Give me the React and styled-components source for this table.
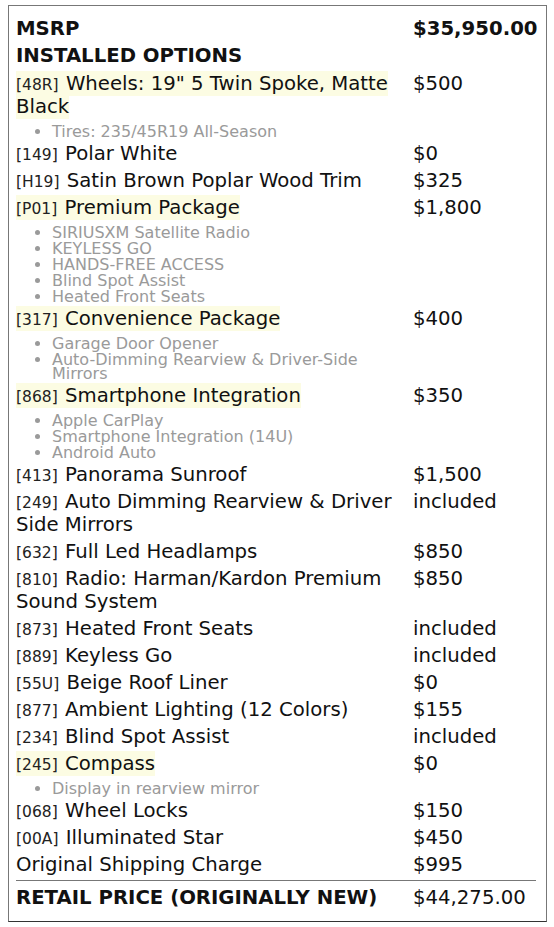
import React from "react";
import styled, { createGlobalStyle } from "styled-components";

const options = [
  { code: "48R", name: 'Wheels: 19" 5 Twin Spoke, Matte Black', price: "$500", mark: true, subs: ["Tires: 235/45R19 All-Season"] },
  { code: "149", name: "Polar White", price: "$0" },
  { code: "H19", name: "Satin Brown Poplar Wood Trim", price: "$325" },
  {
    code: "P01",
    name: "Premium Package",
    price: "$1,800",
    mark: true,
    subs: ["SIRIUSXM Satellite Radio", "KEYLESS GO", "HANDS-FREE ACCESS", "Blind Spot Assist", "Heated Front Seats"],
  },
  {
    code: "317",
    name: "Convenience Package",
    price: "$400",
    mark: true,
    subs: ["Garage Door Opener", "Auto-Dimming Rearview & Driver-Side Mirrors"],
  },
  {
    code: "868",
    name: "Smartphone Integration",
    price: "$350",
    mark: true,
    subs: ["Apple CarPlay", "Smartphone Integration (14U)", "Android Auto"],
  },
  { code: "413", name: "Panorama Sunroof", price: "$1,500" },
  { code: "249", name: "Auto Dimming Rearview & Driver Side Mirrors", price: "included" },
  { code: "632", name: "Full Led Headlamps", price: "$850" },
  { code: "810", name: "Radio: Harman/Kardon Premium Sound System", price: "$850" },
  { code: "873", name: "Heated Front Seats", price: "included" },
  { code: "889", name: "Keyless Go", price: "included" },
  { code: "55U", name: "Beige Roof Liner", price: "$0" },
  { code: "877", name: "Ambient Lighting (12 Colors)", price: "$155" },
  { code: "234", name: "Blind Spot Assist", price: "included" },
  { code: "245", name: "Compass", price: "$0", mark: true, subs: ["Display in rearview mirror"] },
  { code: "068", name: "Wheel Locks", price: "$150" },
  { code: "00A", name: "Illuminated Star", price: "$450" },
  { name: "Original Shipping Charge", price: "$995" },
];

function App() {
  return (
    <>
      <GlobalStyle />
      <Sheet>
        <Grid>
          <Cell bold>MSRP</Cell>
          <Cell bold>$35,950.00</Cell>
          <Heading>INSTALLED OPTIONS</Heading>
          {options.map((o) => (
            <React.Fragment key={o.name}>
              <Cell>
                <Label mark={o.mark}>
                  {o.code && <Code>[{o.code}]</Code>}
                  {o.code && " "}
                  {o.name}
                </Label>
              </Cell>
              <Cell>{o.price}</Cell>
              {o.subs && (
                <SubList>
                  {o.subs.map((s) => (
                    <li key={s}>{s}</li>
                  ))}
                </SubList>
              )}
            </React.Fragment>
          ))}
        </Grid>
        <Total>
          <Cell bold>RETAIL PRICE (ORIGINALLY NEW)</Cell>
          <Cell>$44,275.00</Cell>
        </Total>
      </Sheet>
    </>
  );
}

export default App;

const GlobalStyle = createGlobalStyle`
  body {
    margin: 5px 7px 0 8px;
    background: #fff;
    font-family: "DejaVu Sans", sans-serif;
    color: #111;
  }
`;

const Sheet = styled.div`
  border: 1px solid #777;
  border-bottom-color: #333;
  padding: 9px 8px 10px 7px;
`;

const Grid = styled.div`
  display: grid;
  grid-template-columns: 1fr 125px;
  column-gap: 8px;
`;

const Total = styled(Grid)`
  grid-template-columns: 1fr 123px;
  border-top: 1px solid #777;
  margin: 2px 2px 0 0;
  padding-top: 3px;
`;

const Cell = styled.div`
  font-size: 19.7px;
  line-height: 23px;
  padding: 2px 0;
  font-weight: ${(p) => (p.bold ? "bold" : "normal")};
`;

const Heading = styled(Cell)`
  grid-column: 1 / -1;
  font-weight: bold;
  padding-bottom: 3px;
`;

const Label = styled.span`
  background: ${(p) => (p.mark ? "#fcfce3" : "transparent")};
  padding: 1px 0;
  -webkit-box-decoration-break: clone;
  box-decoration-break: clone;
`;

const Code = styled.span`
  font-size: 15.5px;
  line-height: 1;
  margin-right: 1px;
  color: #222;
`;

const SubList = styled.ul`
  grid-column: 1 / -1;
  margin: 0 133px 0 0;
  padding: 4px 0 0 36px;
  color: #9a9a9a;
  font-size: 16px;
  line-height: 14px;

  > li {
    padding: 1px 0;
  }
`;
